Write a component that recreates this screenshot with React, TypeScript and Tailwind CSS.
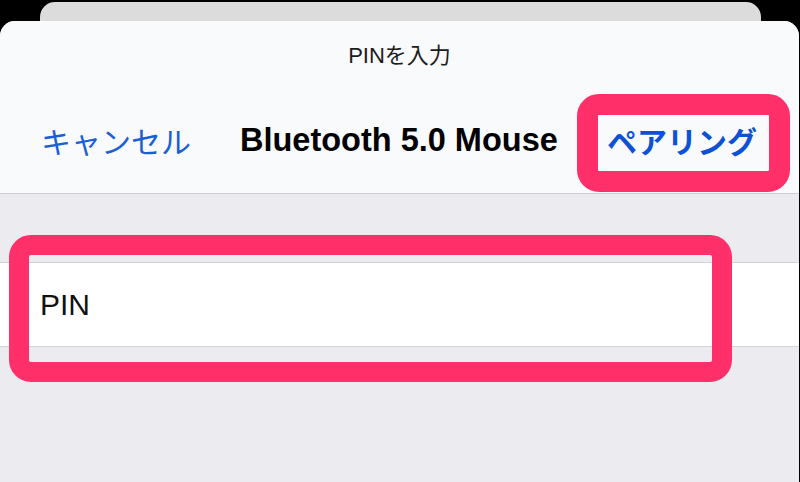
import React from "react";

export default function App() {
  const jp = { fontFamily: '"Noto Sans CJK JP", "Liberation Sans", sans-serif' };
  const latin = { fontFamily: '"Liberation Sans", "Noto Sans CJK JP", sans-serif' };
  return (
    <div className="relative w-[800px] h-[482px] overflow-hidden bg-black">
      {/* card behind */}
      <div className="mx-[40px] mr-[39px] mt-[2px] h-[40px] rounded-t-[15px] bg-[#dcdcdc]" />
      {/* sheet */}
      <div className="relative -mt-[21px] mr-[1px] h-[480px] rounded-t-[15px] bg-[#ebebf0] overflow-hidden">
        <div className="bg-[#f9fafc] border-b border-[#cfcfd4]">
          <div className="h-[66px] flex items-center justify-center">
            <span className="text-[22px] text-[#1c1c1e] leading-none" style={jp}>
              <span style={latin}>PIN</span>を入力
            </span>
          </div>
          <div className="h-[106px] flex items-center pl-[41px]">
            <span className="w-[199px] text-[30px] leading-none text-[#1b5fd6]" style={jp}>
              キャンセル
            </span>
            <span className="w-[367px] text-[32.5px] font-bold leading-none text-black" style={latin}>
              Bluetooth 5.0 Mouse
            </span>
            <span className="text-[30px] font-bold leading-none text-[#0d52d4]" style={jp}>
              ペアリング
            </span>
          </div>
        </div>
        <div className="mt-[68px] h-[85px] bg-white border-y border-[#d1d1d6] flex items-center pl-[40px]">
          <span className="text-[30px] leading-none text-[#111]" style={latin}>
            PIN
          </span>
        </div>
      </div>
      {/* annotation highlights */}
      <div className="absolute left-[577px] top-[94px] w-[213px] h-[98px] border-[21px] border-[#ff2f69] rounded-[22px]" />
      <div className="absolute left-[9px] top-[235px] w-[723px] h-[147px] border-[20px] border-[#ff2f69] rounded-[22px]" />
    </div>
  );
}
